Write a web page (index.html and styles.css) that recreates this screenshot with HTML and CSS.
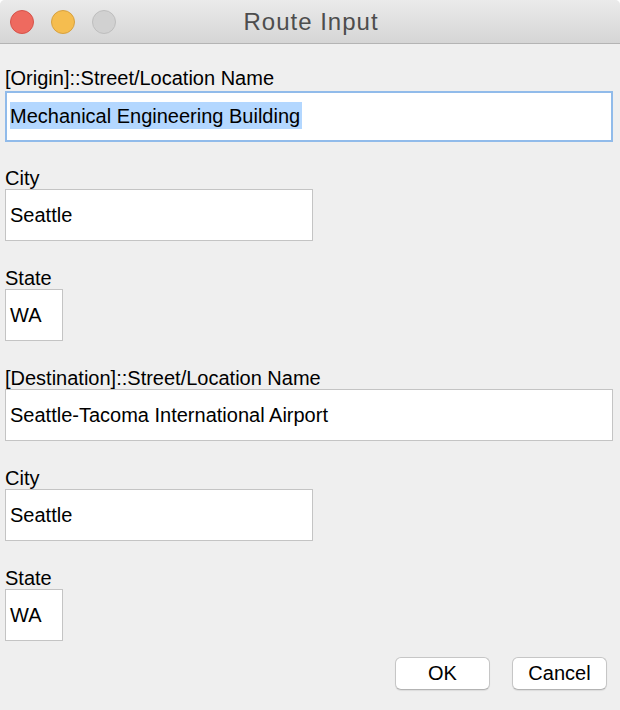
FILE: index.html
```html
<!DOCTYPE html>
<html>
<head>
<meta charset="utf-8">
<link rel="stylesheet" href="styles.css">
</head>
<body>
<div class="window">
  <div class="titlebar">
    <div class="lights">
      <span class="light red"></span>
      <span class="light yellow"></span>
      <span class="light gray"></span>
    </div>
    <div class="title">Route Input</div>
  </div>
  <div class="content">
    <div class="group first">
      <div class="label">[Origin]::Street/Location Name</div>
      <div class="field wide focused"><span class="sel">Mechanical Engineering Building</span></div>
    </div>
    <div class="group">
      <div class="label">City</div>
      <div class="field city">Seattle</div>
    </div>
    <div class="group">
      <div class="label">State</div>
      <div class="field state">WA</div>
    </div>
    <div class="group">
      <div class="label">[Destination]::Street/Location Name</div>
      <div class="field wide">Seattle-Tacoma International Airport</div>
    </div>
    <div class="group">
      <div class="label">City</div>
      <div class="field city">Seattle</div>
    </div>
    <div class="group last">
      <div class="label">State</div>
      <div class="field state">WA</div>
    </div>
    <div class="buttons">
      <div class="btn">OK</div>
      <div class="btn">Cancel</div>
    </div>
  </div>
</div>
</body>
</html>
```
FILE: styles.css
```css
html, body {
  margin: 0;
  padding: 0;
  background: #ffffff;
}
body {
  width: 620px;
  height: 710px;
  overflow: hidden;
  font-family: "Liberation Sans", Arial, sans-serif;
}
.window {
  width: 620px;
  height: 710px;
  background: #efefef;
  border-radius: 5px 5px 0 0;
  overflow: hidden;
}
.titlebar {
  height: 43px;
  border-bottom: 1px solid #b4b4b4;
  background: linear-gradient(#ebebeb, #d5d5d5);
  display: flex;
  align-items: center;
  position: relative;
}
.lights {
  display: flex;
  gap: 17px;
  padding-left: 10px;
  padding-top: 1px;
}
.light {
  width: 24px;
  height: 24px;
  border-radius: 50%;
  box-sizing: border-box;
  display: block;
}
.red { background: #ee6a5f; border: 1px solid #d6534a; }
.yellow { background: #f5bd4f; border: 1px solid #d7a140; }
.gray { background: #d1d1d1; border: 1px solid #bebebe; }
.title {
  position: absolute;
  left: 0;
  right: 0;
  top: 0;
  line-height: 43px;
  text-align: center;
  font-size: 24px;
  letter-spacing: 1px;
  color: #4d4d4d;
  padding-left: 2px;
}
.content {
  padding: 24px 7px 0 5px;
}
.group {
  margin-bottom: 27px;
}
.group.first {
  margin-bottom: 26px;
}
.group.last {
  margin-bottom: 16px;
}
.label {
  font-size: 20px;
  line-height: 21px;
  color: #000000;
}
.field {
  box-sizing: border-box;
  height: 52px;
  background: #ffffff;
  border: 1px solid #c4c4c4;
  font-size: 20px;
  line-height: 50px;
  padding-left: 4px;
  color: #000000;
  white-space: nowrap;
}
.field.focused {
  margin-top: 2px;
  height: 51px;
  border: 2px solid #91bbea;
  padding-left: 3px;
  line-height: 47px;
}
.sel {
  background: #b3d7ff;
  padding: 3px 2px 2px 0;
}
.city { width: 308px; }
.state { width: 58px; }
.buttons {
  display: flex;
  justify-content: flex-end;
  gap: 22px;
  padding-right: 6px;
}
.btn {
  box-sizing: border-box;
  width: 95px;
  height: 33px;
  background: #ffffff;
  border: 1px solid #c6c6c6;
  border-bottom-color: #b3b3b3;
  border-radius: 6px;
  box-shadow: 0 1px 1px rgba(0,0,0,0.08);
  font-size: 20px;
  line-height: 31px;
  text-align: center;
  color: #000000;
}
```
